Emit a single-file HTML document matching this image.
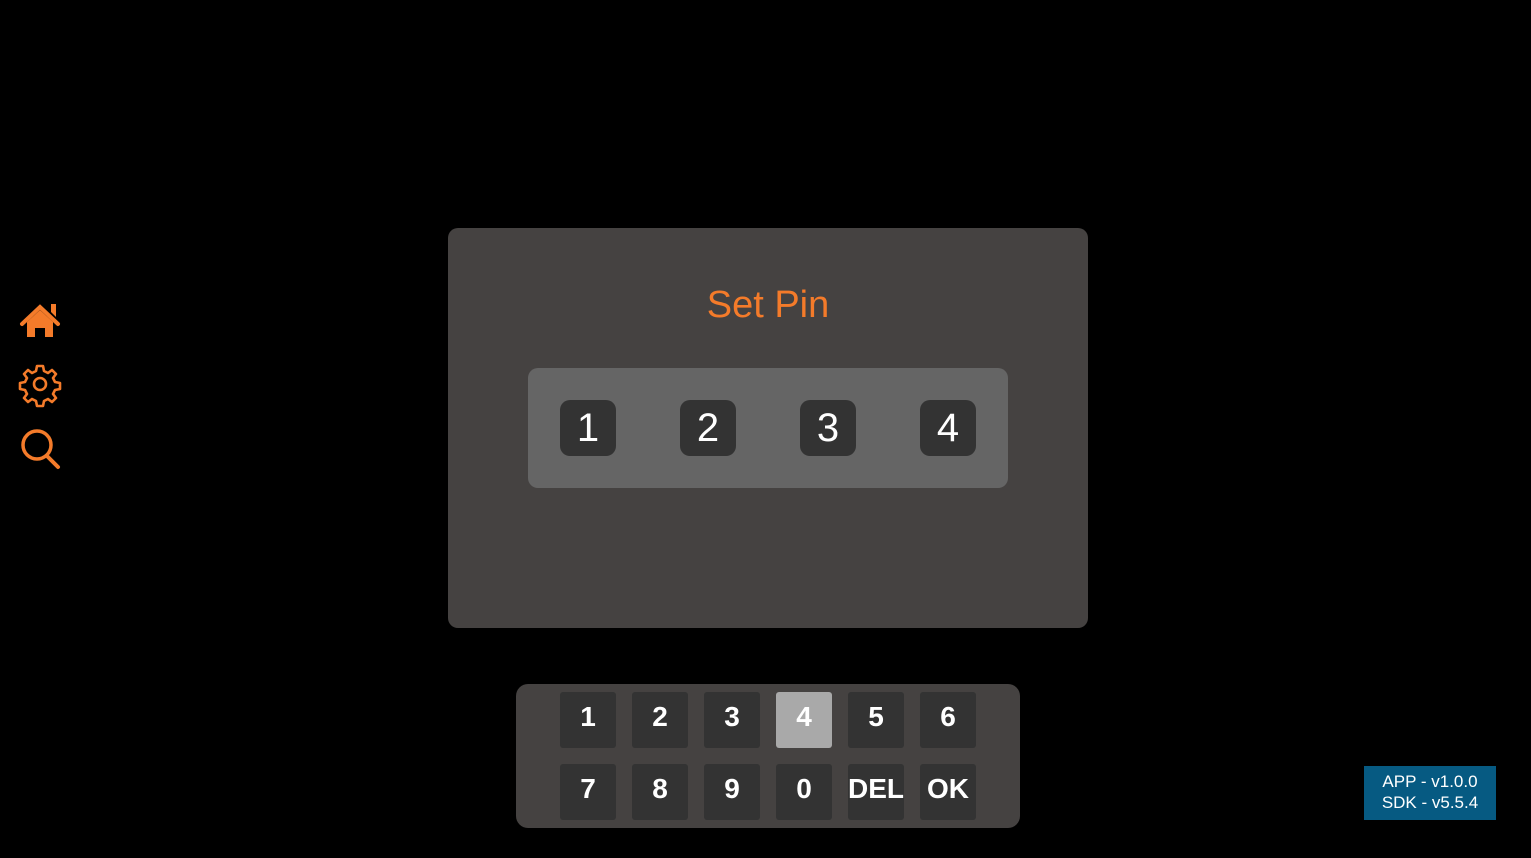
<!DOCTYPE html>
<html><head><style>
body{margin:0;width:1531px;height:858px;background:#000;position:relative;overflow:hidden;font-family:"Liberation Sans",sans-serif}
.a{position:absolute}
.dlg{left:448px;top:228px;width:640px;height:400px;background:#454241;border-radius:10px}
.t{left:448px;width:640px;top:284px;text-align:center;color:#f47b2a;font-size:38px}
.in{left:528px;top:368px;width:480px;height:120px;background:#656565;border-radius:10px}
.pb{width:56px;height:56px;background:#333;border-radius:10px;color:#fff;font-size:40px;text-align:center;line-height:56px;top:400px}
.kp{left:516px;top:684px;width:504px;height:144px;background:#454241;border-radius:12px}
.k{width:56px;height:56px;background:#333;border-radius:3px;color:#fff;font-size:28px;font-weight:bold;text-align:center;line-height:50px}
.v{left:1364px;top:766px;width:132px;height:54px;background:#065a82;color:#fff;font-size:17px;line-height:21px;text-align:center;padding-top:5px;box-sizing:border-box}
</style></head><body>
<svg class="a" style="left:18px;top:300px" width="46" height="170" viewBox="0 0 46 170" fill="none" stroke="#f47b2a">
<path d="M4 24 L22 7 L40 24" stroke-width="4" stroke-linecap="round"/>
<path d="M33 12 V4 h5 V17" fill="#f47b2a" stroke="none"/>
<path d="M9 22 L22 10 L35 22 V37 H27 V28 H17 V37 H9 Z" fill="#f47b2a" stroke="none"/>
<g transform="translate(22,84)" stroke-width="2.6">
<path d="M-3 -18 h6 l1 5 l4 2 l4-3 l4 4 l-3 4 l2 4 l5 1 v6 l-5 1 l-2 4 l3 4 l-4 4 l-4-3 l-4 2 l-1 5 h-6 l-1-5 l-4-2 l-4 3 l-4-4 l3-4 l-2-4 l-5-1 v-6 l5-1 l2-4 l-3-4 l4-4 l4 3 l4-2 Z" stroke-linejoin="round"/>
<circle r="6"/></g>
<circle cx="19" cy="145" r="14" stroke-width="3.5"/>
<path d="M29 156 L40 167" stroke-width="4" stroke-linecap="round"/>
</svg>
<div class="a dlg"></div>
<div class="a t">Set Pin</div>
<div class="a in"></div>
<div class="a pb" style="left:560px">1</div>
<div class="a pb" style="left:680px">2</div>
<div class="a pb" style="left:800px">3</div>
<div class="a pb" style="left:920px">4</div>
<div class="a kp"></div>
<div class="a k" style="left:560px;top:692px">1</div>
<div class="a k" style="left:632px;top:692px">2</div>
<div class="a k" style="left:704px;top:692px">3</div>
<div class="a k" style="left:776px;top:692px;background:#a9a9a9">4</div>
<div class="a k" style="left:848px;top:692px">5</div>
<div class="a k" style="left:920px;top:692px">6</div>
<div class="a k" style="left:560px;top:764px">7</div>
<div class="a k" style="left:632px;top:764px">8</div>
<div class="a k" style="left:704px;top:764px">9</div>
<div class="a k" style="left:776px;top:764px">0</div>
<div class="a k" style="left:848px;top:764px">DEL</div>
<div class="a k" style="left:920px;top:764px">OK</div>
<div class="a v">APP - v1.0.0<br>SDK - v5.5.4</div>
</body></html>
